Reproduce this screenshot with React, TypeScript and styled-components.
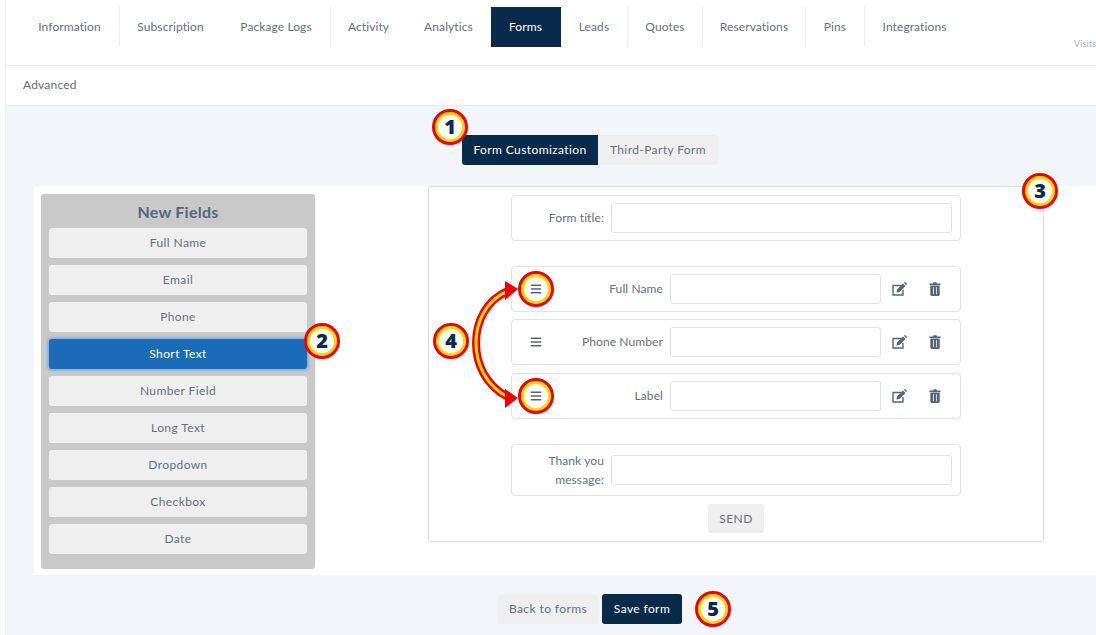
import { createGlobalStyle, styled } from 'styled-components'
import { FaBars } from 'react-icons/fa'

const GlobalStyle = createGlobalStyle`
  html, body {
    margin: 0;
    padding: 0;
    background: #fff;
  }
  * {
    box-sizing: border-box;
  }
`

const Root = styled.div`
  position: relative;
  width: 1096px;
  height: 635px;
  overflow: hidden;
  padding-left: 5px;
  font-family: Lato, 'Liberation Sans', sans-serif;
  font-size: 12px;
  letter-spacing: 0.4px;
  color: #647182;
`

const Page = styled.div`
  height: 635px;
  border-left: 1px solid #eef0f2;
  background: #f3f6f9;
`

const TopNav = styled.nav`
  position: relative;
  display: flex;
  height: 66px;
  padding: 7px 0 0 14px;
  background: #fff;
  border-bottom: 1px solid #e8eaec;
  letter-spacing: 0.1px;
`

const Tab = styled.div<{ $active?: boolean; $sep?: boolean; $w: number }>`
  width: ${p => p.$w}px;
  height: 40px;
  line-height: 40px;
  text-align: center;
  border-right: 1px solid ${p => (p.$sep ? '#eceeef' : 'transparent')};
  background: ${p => (p.$active ? '#082b4c' : 'transparent')};
  color: ${p => (p.$active ? '#fff' : '#647182')};
`

const Visits = styled.span`
  position: absolute;
  right: 0;
  top: 38px;
  font-size: 9px;
  color: #a9b0b8;
`

const SubNav = styled.div`
  height: 40px;
  padding-left: 17px;
  line-height: 38px;
  letter-spacing: 0.2px;
  background: #fff;
  border-bottom: 1px solid #e8eaec;
`

const ToggleRow = styled.div`
  display: flex;
  padding: 29px 0 0 456px;
`

const Toggle = styled.div<{ $active?: boolean; $w: number }>`
  width: ${p => p.$w}px;
  height: 30px;
  line-height: 30px;
  text-align: center;
  border-radius: ${p => (p.$active ? '3px 0 0 3px' : '0 3px 3px 0')};
  background: ${p => (p.$active ? '#082b4c' : '#efefef')};
  color: ${p => (p.$active ? '#fff' : '#647182')};
`

const Panel = styled.section`
  display: flex;
  align-items: flex-start;
  gap: 113px;
  height: 389px;
  margin: 21px 0 0 28px;
  padding-left: 7px;
  background: #fff;
`

const Palette = styled.aside`
  display: flex;
  flex-direction: column;
  gap: 7px;
  width: 274px;
  height: 375px;
  margin-top: 8px;
  padding: 0 8px;
  background: #c9c9c9;
  border-radius: 3px;
`

const PaletteTitle = styled.h3`
  height: 27px;
  margin: 0;
  padding-top: 8px;
  font-size: 16px;
  line-height: 20px;
  font-weight: 700;
  letter-spacing: 0.25px;
  text-align: center;
  color: #566679;
`

const FieldButton = styled.div<{ $active?: boolean }>`
  height: 30px;
  line-height: 30px;
  text-align: center;
  border-radius: 3px;
  background: ${p => (p.$active ? '#1a6cb8' : '#efefef')};
  color: ${p => (p.$active ? '#fff' : '#647182')};
  box-shadow: ${p => (p.$active ? '0 0 2px 2px #8db2dc' : 'none')};
`

const FormBox = styled.div`
  display: flex;
  flex-direction: column;
  align-items: center;
  width: 616px;
  height: 356px;
  padding-top: 8px;
  border: 1px solid #dedede;
  border-radius: 3px;
`

const FormRow = styled.div<{ $h: number; $top: number }>`
  display: flex;
  align-items: center;
  width: 450px;
  height: ${p => p.$h}px;
  margin-top: ${p => p.$top}px;
  border: 1px solid #e2e2e2;
  border-radius: 4px;
`

const Label = styled.label<{ $w: number }>`
  flex: none;
  width: ${p => p.$w}px;
  padding-right: 7px;
  line-height: 18px;
  letter-spacing: 0.1px;
  text-align: right;
`

const MessageLabel = styled(Label)`
  line-height: 19px;
`

const TextInput = styled.div<{ $w: number }>`
  flex: none;
  width: ${p => p.$w}px;
  height: 30px;
  background: #fff;
  border: 1px solid #e2e2e2;
  border-radius: 3px;
`

const Handle = styled.span`
  display: flex;
  justify-content: center;
  flex: none;
  width: 48px;
  font-size: 12px;
  color: #566679;
`

const ActionIcon = styled.span<{ $w: number }>`
  display: flex;
  justify-content: center;
  flex: none;
  width: ${p => p.$w}px;
  color: #566679;
`

const SendButton = styled.div`
  width: 56px;
  height: 29px;
  margin-top: 8px;
  line-height: 29px;
  text-align: center;
  border-radius: 3px;
  background: #efefef;
`

const FooterRow = styled.div`
  display: flex;
  gap: 4px;
  padding: 19px 0 0 492px;
`

const FooterButton = styled.div<{ $primary?: boolean; $w: number }>`
  width: ${p => p.$w}px;
  height: 30px;
  line-height: 30px;
  text-align: center;
  border-radius: 3px;
  background: ${p => (p.$primary ? '#082b4c' : '#efefef')};
  color: ${p => (p.$primary ? '#fff' : '#647182')};
`

const Badge = styled.span<{ $x: number; $y: number }>`
  position: absolute;
  left: ${p => p.$x - 18}px;
  top: ${p => p.$y - 18}px;
  width: 36px;
  height: 36px;
  border-radius: 50%;
  border: 3px solid #f00000;
  box-shadow: inset 0 0 0 3px #ffd800;
  background: #fff;
  font-family: 'Open Sans', 'Liberation Sans', sans-serif;
  font-size: 20px;
  font-weight: 800;
  line-height: 30px;
  letter-spacing: 0;
  text-align: center;
  color: #082b4c;
`

const Ring = styled(Badge)`
  background: transparent;
`

const Arrow = styled.svg`
  position: absolute;
  left: 460px;
  top: 270px;
`

const EditIcon = () => (
  <svg width="15" height="14" viewBox="0 0 15 14">
    <path d="M9.5 3.5H1v9.5h10V8" fill="none" stroke="currentColor" strokeWidth="1.4" />
    <path d="M4.5 10.5 5 7.5 11 1.5 13.5 4 7.5 10Z" fill="currentColor" />
    <path d="M11.8 0.8 13 0 15 2 14.2 3.2Z" fill="currentColor" />
  </svg>
)

const TrashIcon = () => (
  <svg width="12" height="14" viewBox="0 0 12 14">
    <path d="M4 1.5 4.6 0.3H7.4L8 1.5H11.5V3H0.5V1.5Z" fill="currentColor" />
    <path d="M1.3 3.6H10.7V12.6Q10.7 14 9.4 14H2.6Q1.3 14 1.3 12.6Z" fill="currentColor" />
    <path d="M4.5 5.2V12.2M7.5 5.2V12.2" stroke="#dfe3e8" strokeWidth="0.9" />
  </svg>
)

const tabs = [
  { name: 'Information', w: 100, sep: true },
  { name: 'Subscription', w: 102 },
  { name: 'Package Logs', w: 109, sep: true },
  { name: 'Activity', w: 76 },
  { name: 'Analytics', w: 84 },
  { name: 'Forms', w: 70, active: true },
  { name: 'Leads', w: 67, sep: true },
  { name: 'Quotes', w: 75, sep: true },
  { name: 'Reservations', w: 103, sep: true },
  { name: 'Pins', w: 59, sep: true },
  { name: 'Integrations', w: 100 },
]

const newFields = ['Full Name', 'Email', 'Phone', 'Short Text', 'Number Field', 'Long Text', 'Dropdown', 'Checkbox', 'Date']

const rows = [
  { label: 'Full Name', top: 25 },
  { label: 'Phone Number', top: 7 },
  { label: 'Label', top: 8 },
]

const arc = 'M508 291 C486 300 476 322 476 343 C476 364 486 386 508 397'

export default function App() {
  return (
    <>
      <GlobalStyle />
      <Root>
        <Page>
          <TopNav>
            {tabs.map(t => (
              <Tab key={t.name} $w={t.w} $sep={t.sep} $active={t.active}>{t.name}</Tab>
            ))}
            <Visits>Visits</Visits>
          </TopNav>
          <SubNav>Advanced</SubNav>
          <ToggleRow>
            <Toggle $active $w={136}>Form Customization</Toggle>
            <Toggle $w={120}>Third-Party Form</Toggle>
          </ToggleRow>
          <Panel>
            <Palette>
              <PaletteTitle>New Fields</PaletteTitle>
              {newFields.map(f => (
                <FieldButton key={f} $active={f === 'Short Text'}>{f}</FieldButton>
              ))}
            </Palette>
            <FormBox>
              <FormRow $h={46} $top={0}>
                <Label $w={99}>Form title:</Label>
                <TextInput $w={341} />
              </FormRow>
              {rows.map(r => (
                <FormRow key={r.label} $h={46} $top={r.top}>
                  <Handle><FaBars /></Handle>
                  <Label $w={110}>{r.label}</Label>
                  <TextInput $w={211} />
                  <ActionIcon $w={37}><EditIcon /></ActionIcon>
                  <ActionIcon $w={33}><TrashIcon /></ActionIcon>
                </FormRow>
              ))}
              <FormRow $h={52} $top={25}>
                <MessageLabel $w={99}>Thank you message:</MessageLabel>
                <TextInput $w={341} />
              </FormRow>
              <SendButton>SEND</SendButton>
            </FormBox>
          </Panel>
          <FooterRow>
            <FooterButton $w={100}>Back to forms</FooterButton>
            <FooterButton $primary $w={80}>Save form</FooterButton>
          </FooterRow>
        </Page>
        <Arrow width="70" height="145" viewBox="460 270 70 145">
          <path d={arc} fill="none" stroke="#f00000" strokeWidth="8" />
          <path d={arc} fill="none" stroke="#ffd800" strokeWidth="3" />
          <polygon points="518,289 505,281 505,300" fill="#f00000" />
          <polygon points="518,398 505,389 505,408" fill="#f00000" />
        </Arrow>
        <Badge $x={450} $y={127}>1</Badge>
        <Badge $x={322} $y={341}>2</Badge>
        <Badge $x={1040} $y={191}>3</Badge>
        <Badge $x={451} $y={341}>4</Badge>
        <Badge $x={713} $y={609}>5</Badge>
        <Ring $x={536} $y={289} />
        <Ring $x={536} $y={396} />
      </Root>
    </>
  )
}
